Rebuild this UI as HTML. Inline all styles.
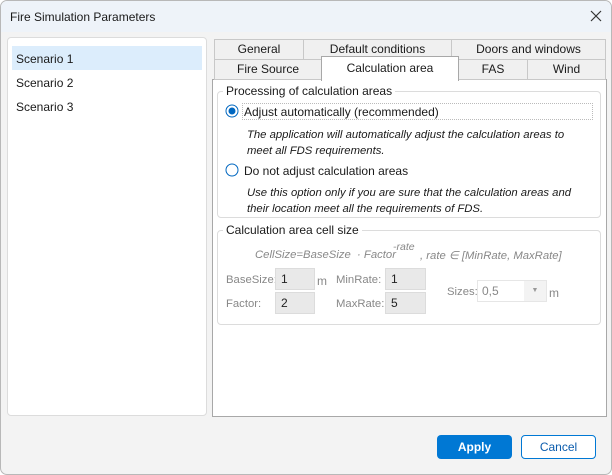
<!DOCTYPE html><html><head><style>
*{box-sizing:border-box;margin:0;padding:0}
body{width:612px;height:475px;overflow:hidden;font-family:"Liberation Sans",sans-serif;font-size:12px;color:#1a1a1a;background:#fff}
.win{position:absolute;left:0;top:0;width:612px;height:475px;border:1px solid #b8b8b8;border-radius:7px;background:#f3f3f3;overflow:hidden}
.title{position:absolute;left:0;top:0;width:612px;height:31px;background:#eef3f9}
.abs{position:absolute;white-space:nowrap}
.tab{position:absolute;background:#f0f0f0;border:1px solid #c8c8c8;text-align:center;line-height:18px;font-size:12px}
.gb{position:absolute;border:1px solid #dcdcdc;border-radius:4px}
.leg{position:absolute;background:#fff;padding:0 3px;top:-8px;left:5px;font-size:12px;white-space:nowrap}
.it{font-style:italic}
.inp{position:absolute;background:#e9e9e9;border:1px solid #dcdcdc;height:22px;line-height:20px;padding-left:5px;color:#222;font-size:12px}
.gray{color:#888}
</style></head><body><div class="win">
<div class="title"></div>
<div class="abs" style="left:9px;top:9px;font-size:12px">Fire Simulation Parameters</div>
<svg class="abs" style="left:589px;top:9px" width="12" height="12"><path d="M1 1L11 11M11 1L1 11" stroke="#333" stroke-width="1.2"/></svg>
<div class="abs" style="left:6px;top:36px;width:200px;height:379px;background:#fff;border:1px solid #dcdcdc;border-radius:4px"></div>
<div class="abs" style="left:11px;top:45px;width:190px;height:24px;background:#dcedfc"></div>
<div class="abs" style="left:15px;top:51px">Scenario 1</div>
<div class="abs" style="left:15px;top:75px">Scenario 2</div>
<div class="abs" style="left:15px;top:99px">Scenario 3</div>
<div class="abs" style="left:211px;top:78px;width:395px;height:338px;background:#fff;border:1px solid #a8a8a8"></div>
<div class="tab" style="left:213px;top:38px;width:90px;height:21px">General</div>
<div class="tab" style="left:302px;top:38px;width:149px;height:21px">Default conditions</div>
<div class="tab" style="left:450px;top:38px;width:155px;height:21px">Doors and windows</div>
<div class="tab" style="left:213px;top:58px;width:108px;height:21px">Fire Source</div>
<div class="tab" style="left:457px;top:58px;width:70px;height:21px">FAS</div>
<div class="tab" style="left:526px;top:58px;width:79px;height:21px">Wind</div>
<div class="tab" style="left:320px;top:55px;width:138px;height:25px;background:#fff;border-bottom:none;border-color:#a8a8a8;line-height:23px">Calculation area</div>
<div class="gb" style="left:216px;top:90px;width:384px;height:127px"><div class="leg">Processing of calculation areas</div></div>
<div class="abs" style="left:241px;top:102px;width:351px;height:17px;border:1px dotted #bbb"></div>
<svg class="abs" style="left:224px;top:103px" width="14" height="14"><circle cx="7" cy="7" r="6" fill="#fff" stroke="#0067c0"/><circle cx="7" cy="7" r="3.5" fill="#0067c0"/></svg>
<div class="abs" style="left:243px;top:104px">Adjust automatically (recommended)</div>
<div class="abs it" style="left:246px;top:126px;line-height:16px;font-size:11.3px">The application will automatically adjust the calculation areas to<br>meet all FDS requirements.</div>
<svg class="abs" style="left:224px;top:162px" width="14" height="14"><circle cx="7" cy="7" r="6" fill="#fff" stroke="#0067c0"/></svg>
<div class="abs" style="left:243px;top:163px">Do not adjust calculation areas</div>
<div class="abs it" style="left:246px;top:184px;line-height:16px;font-size:11.3px">Use this option only if you are sure that the calculation areas and<br>their location meet all the requirements of FDS.</div>
<div class="gb" style="left:216px;top:229px;width:384px;height:95px"><div class="leg">Calculation area cell size</div></div>
<div class="abs it gray" style="left:254px;top:248px;font-size:11.3px">CellSize=BaseSize &nbsp;· Factor</div>
<div class="abs it gray" style="left:392px;top:240px;font-size:10.5px">-rate</div>
<div class="abs it gray" style="left:419px;top:248px;font-size:11.3px">, rate ∈ [MinRate, MaxRate]</div>
<div class="abs gray" style="left:225px;top:273px;font-size:11.3px">BaseSize:</div>
<div class="inp" style="left:274px;top:267px;width:40px">1</div>
<div class="abs gray" style="left:316px;top:273px">m</div>
<div class="abs gray" style="left:335px;top:273px;font-size:11.3px">MinRate:</div>
<div class="inp" style="left:384px;top:267px;width:41px">1</div>
<div class="abs gray" style="left:225px;top:297px;font-size:11.3px">Factor:</div>
<div class="inp" style="left:274px;top:291px;width:40px">2</div>
<div class="abs gray" style="left:335px;top:297px;font-size:11.3px">MaxRate:</div>
<div class="inp" style="left:384px;top:291px;width:41px">5</div>
<div class="abs gray" style="left:446px;top:285px;font-size:11.3px">Sizes:</div>
<div class="abs" style="left:476px;top:279px;width:70px;height:22px;background:#fff;border:1px solid #e6e6e6;padding-left:4px;line-height:20px;color:#888">0,5<span style="position:absolute;right:0;top:0;width:22px;height:20px;background:#f3f3f3;font-size:7px;text-align:center;color:#999">▼</span></div>
<div class="abs gray" style="left:548px;top:285px">m</div>
<div class="abs" style="left:436px;top:434px;width:75px;height:24px;background:#0078d4;border-radius:4px;color:#fff;font-weight:bold;text-align:center;line-height:24px">Apply</div>
<div class="abs" style="left:520px;top:434px;width:75px;height:24px;background:#fff;border:1px solid #0078d4;border-radius:4px;color:#0b5cad;text-align:center;line-height:22px">Cancel</div>
</div></body></html>
